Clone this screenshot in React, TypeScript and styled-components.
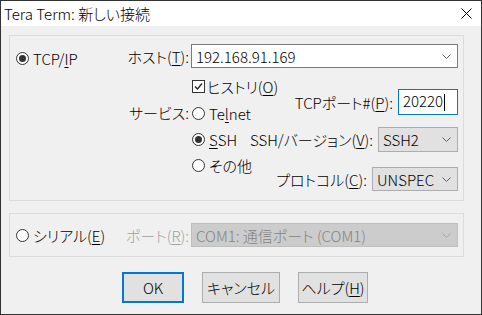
import React from 'react';
import styled, { createGlobalStyle } from 'styled-components';

const GlobalStyle = createGlobalStyle`
  html, body { margin: 0; padding: 0; background: #f0f0f0; }
  body {
    font-family: "Noto Sans CJK JP", "Noto Sans", sans-serif;
    font-size: 15px;
    font-weight: 300;
    color: #000;
    font-feature-settings: "palt";
  }
  * { box-sizing: border-box; }
  u { text-underline-offset: 2px; text-decoration-thickness: 1px; }
`;

const Window = styled.div`
  width: 482px;
  height: 315px;
  border: 1px solid #333;
  display: flex;
  flex-direction: column;
  background: #f0f0f0;
`;

const TitleBar = styled.div`
  height: 25px;
  background: #fff;
  display: flex;
  align-items: center;
  justify-content: space-between;
  padding: 0 9px 0 3px;
  line-height: 1;
`;

const Body = styled.div`
  flex: 1;
  padding: 9px 17px 0 8px;
  line-height: 1;
`;

const Group = styled.div<{ $height: number; $center?: boolean }>`
  height: ${(p) => p.$height}px;
  border: 1px solid #dcdcdc;
  display: flex;
  align-items: ${(p) => (p.$center ? 'center' : 'flex-start')};
  padding-right: 5px;
  & + & { margin-top: 12px; }
`;

const SideCol = styled.div<{ $top?: number }>`
  width: 113px;
  flex: none;
  padding: ${(p) => p.$top ?? 0}px 0 0 6px;
`;

const Main = styled.div`
  flex: 1;
  display: flex;
  flex-direction: column;
`;

const Option = styled.label<{ $h?: number }>`
  display: flex;
  align-items: center;
  height: ${(p) => p.$h ?? 17}px;
  white-space: nowrap;
`;

const RadioMark = styled.span<{ $checked?: boolean }>`
  position: relative;
  flex: none;
  width: 13px;
  height: 13px;
  margin-right: 4px;
  border: 1px solid #333;
  border-radius: 50%;
  background: #fff;
  &::after {
    content: '';
    position: absolute;
    inset: 2px;
    border-radius: 50%;
    background: ${(p) => (p.$checked ? '#333' : 'transparent')};
  }
`;

const CheckMark = styled.span`
  flex: none;
  width: 13px;
  height: 13px;
  margin-right: 2px;
  border: 1px solid #333;
  background: #fff;
  display: flex;
  align-items: center;
  justify-content: center;
`;

const FieldRow = styled.div<{ $top?: number }>`
  display: flex;
  align-items: center;
  margin-top: ${(p) => p.$top ?? 0}px;
`;

const FieldLabel = styled.span<{ $disabled?: boolean; $h?: number }>`
  width: 66px;
  flex: none;
  margin-right: 2px;
  text-align: right;
  white-space: nowrap;
  color: ${(p) => (p.$disabled ? '#a0a0a0' : '#000')};
  ${(p) => (p.$h ? `height: ${p.$h}px; line-height: ${p.$h}px;` : '')}
`;

type BoxKind = 'edit' | 'list' | 'disabled' | 'focus';

const Box = styled.div<{ $kind: BoxKind; $width?: number; $height: number }>`
  ${(p) => (p.$width ? `width: ${p.$width}px;` : 'flex: 1;')}
  height: ${(p) => p.$height}px;
  display: flex;
  align-items: center;
  justify-content: space-between;
  padding: 0 6px 0 4px;
  white-space: nowrap;
  border: 1px solid
    ${(p) =>
      ({ edit: '#7a7a7a', list: '#adadad', disabled: '#bfbfbf', focus: '#0078d7' })[p.$kind]};
  background: ${(p) => ({ edit: '#fff', list: '#e1e1e1', disabled: '#cccccc', focus: '#fff' })[p.$kind]};
  color: ${(p) => (p.$kind === 'disabled' ? '#838383' : '#000')};
`;

const Caret = styled.span`
  display: inline-block;
  width: 1px;
  height: 17px;
  background: #000;
  margin-left: 1px;
  vertical-align: middle;
`;

const Lower = styled.div`
  display: flex;
`;

const ServiceCol = styled.div`
  width: 125px;
  flex: none;
`;

const CheckRow = styled(Option)`
  margin: 10px 0 0 69px;
`;

const ServiceRow = styled.div`
  display: flex;
  align-items: flex-start;
  margin-top: 5px;
`;

const RadioList = styled.div`
  display: flex;
  flex-direction: column;
  padding-left: 1px;
`;

const SettingsCol = styled.div`
  flex: 1;
  display: flex;
  flex-direction: column;
  align-items: flex-end;
`;

const SettingRow = styled.div<{ $top: number }>`
  display: flex;
  align-items: center;
  gap: 5px;
  margin-top: ${(p) => p.$top}px;
  white-space: nowrap;
`;

const ButtonRow = styled.div`
  display: flex;
  gap: 18px;
  margin-top: 15px;
  padding-left: 113px;
`;

const Button = styled.button<{ $width: number; $default?: boolean }>`
  width: ${(p) => p.$width}px;
  height: 31px;
  padding: 0;
  font: inherit;
  color: #000;
  background: #e1e1e1;
  border: ${(p) => (p.$default ? '2px solid #0078d7' : '1px solid #adadad')};
  display: flex;
  align-items: center;
  justify-content: center;
  white-space: nowrap;
`;

const Chevron = ({ color = '#606060' }: { color?: string }) => (
  <svg width="9" height="5" viewBox="0 0 9 5">
    <polyline points="0.5,0.5 4.5,4.5 8.5,0.5" fill="none" stroke={color} strokeWidth="1" />
  </svg>
);

const CloseIcon = () => (
  <svg width="11" height="11" viewBox="0 0 11 11">
    <path d="M0.5 0.5 L10.5 10.5 M10.5 0.5 L0.5 10.5" stroke="#000" strokeWidth="1" />
  </svg>
);

const Tick = () => (
  <svg width="11" height="11" viewBox="0 0 11 11">
    <polyline points="2,5.5 4.5,8 9,2.5" fill="none" stroke="#222" strokeWidth="1.3" />
  </svg>
);

export default function App() {
  return (
    <>
      <GlobalStyle />
      <Window>
        <TitleBar>
          <span>Tera Term: 新しい接続</span>
          <CloseIcon />
        </TitleBar>
        <Body>
          <Group $height={166}>
            <SideCol $top={14}>
              <Option>
                <RadioMark $checked />
                TCP/<u>I</u>P
              </Option>
            </SideCol>
            <Main>
              <FieldRow $top={8}>
                <FieldLabel>
                  ホスト(<u>T</u>):
                </FieldLabel>
                <Box $kind="edit" $height={24}>
                  192.168.91.169
                  <Chevron />
                </Box>
              </FieldRow>
              <Lower>
                <ServiceCol>
                  <CheckRow>
                    <CheckMark>
                      <Tick />
                    </CheckMark>
                    ヒストリ(<u>O</u>)
                  </CheckRow>
                  <ServiceRow>
                    <FieldLabel $h={26}>サービス:</FieldLabel>
                    <RadioList>
                      <Option $h={26}>
                        <RadioMark />
                        Te<u>l</u>net
                      </Option>
                      <Option $h={26}>
                        <RadioMark $checked />
                        <u>S</u>SH
                      </Option>
                      <Option $h={26}>
                        <RadioMark />
                        その他
                      </Option>
                    </RadioList>
                  </ServiceRow>
                </ServiceCol>
                <SettingsCol>
                  <SettingRow $top={21}>
                    <span>
                      TCPポート#(<u>P</u>):
                    </span>
                    <Box $kind="focus" $width={60} $height={26}>
                      <span>
                        20220
                        <Caret />
                      </span>
                    </Box>
                  </SettingRow>
                  <SettingRow $top={12}>
                    <span>
                      SSH/バージョン(<u>V</u>):
                    </span>
                    <Box $kind="list" $width={80} $height={25}>
                      SSH2
                      <Chevron />
                    </Box>
                  </SettingRow>
                  <SettingRow $top={15}>
                    <span>
                      プロトコル(<u>C</u>):
                    </span>
                    <Box $kind="list" $width={86} $height={24}>
                      UNSPEC
                      <Chevron />
                    </Box>
                  </SettingRow>
                </SettingsCol>
              </Lower>
            </Main>
          </Group>
          <Group $height={44} $center>
            <SideCol>
              <Option>
                <RadioMark />
                シリアル(<u>E</u>)
              </Option>
            </SideCol>
            <FieldLabel $disabled>
              ポート(<u>R</u>):
            </FieldLabel>
            <Box $kind="disabled" $height={24}>
              COM1: 通信ポート (COM1)
              <Chevron color="#a6a6a6" />
            </Box>
          </Group>
          <ButtonRow>
            <Button $width={62} $default>
              OK
            </Button>
            <Button $width={78}>キャンセル</Button>
            <Button $width={70}>
              ヘルプ(<u>H</u>)
            </Button>
          </ButtonRow>
        </Body>
      </Window>
    </>
  );
}
